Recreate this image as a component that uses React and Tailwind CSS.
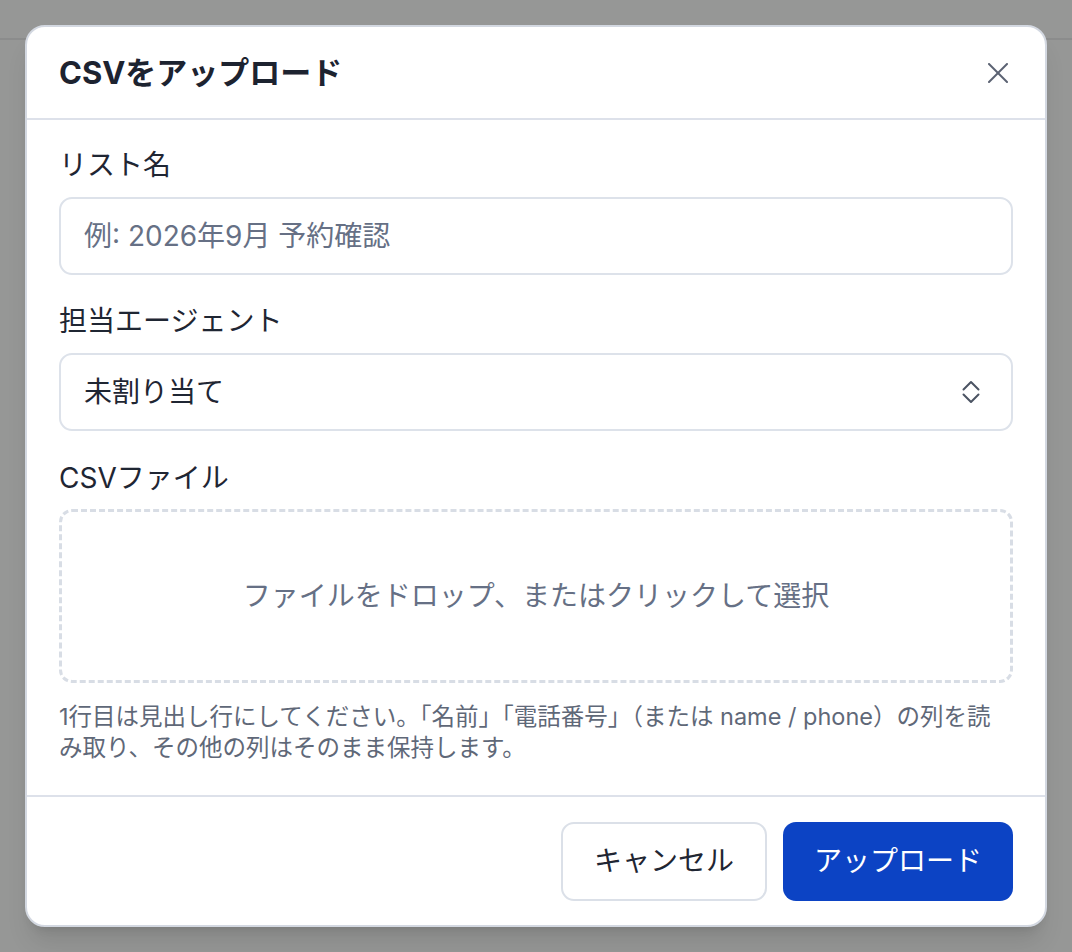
import { useState } from 'react';

function CloseIcon() {
  return (
    <svg width="20" height="20" viewBox="0 0 20 20" fill="none" stroke="currentColor" strokeWidth="2" strokeLinecap="round">
      <path d="M1 1 L19 19" />
      <path d="M19 1 L1 19" />
    </svg>
  );
}

function UpDownIcon() {
  return (
    <svg width="18" height="24" viewBox="0 0 18 24" fill="none" stroke="currentColor" strokeWidth="2" strokeLinecap="round" strokeLinejoin="round">
      <path d="M1.5 9.5 L9 2 L16.5 9.5" />
      <path d="M1.5 14.5 L9 22 L16.5 14.5" />
    </svg>
  );
}

export default function App() {
  const [name, setName] = useState('');

  return (
    <div className="h-screen bg-[#969796] font-[Inter,'Noto_Sans_CJK_JP',sans-serif] relative overflow-hidden">
      <div className="h-[40px] border-b-2 border-[#8b8c8c]" />
      <div className="absolute inset-0 flex items-center justify-center">
        <div className="w-[1022px] h-[902px] bg-white rounded-[20px] border-2 border-[#d3d8e1] shadow-xl flex flex-col overflow-hidden">
          <div className="h-[93px] shrink-0 flex items-center justify-between px-8 border-b-2 border-[#dde1ea]">
            <h2 className="text-[31px] font-bold text-[#1d2330] leading-none">CSVをアップロード</h2>
            <button className="w-9 h-9 mr-[-3px] flex items-center justify-center text-[#5b6272]">
              <CloseIcon />
            </button>
          </div>

          <div className="px-8 pt-[27px] pb-8 border-b-2 border-[#dde1ea]">
            <label className="block text-[28px] leading-[36px] text-[#1f2633] mb-[14px]">リスト名</label>
            <input
              value={name}
              onChange={e => setName(e.target.value)}
              placeholder="例: 2026年9月 予約確認"
              className="w-full h-[78px] rounded-[13px] border-2 border-[#dde2ea] pl-[23px] text-[28px] text-[#1f2633] placeholder:text-[#667085] focus:outline-none"
            />

            <label className="block text-[28px] leading-[36px] text-[#1f2633] mt-[28px] mb-[14px]">担当エージェント</label>
            <button className="w-full h-[78px] rounded-[13px] border-2 border-[#dde2ea] pl-[23px] pr-[31px] flex items-center justify-between text-[28px] text-[#1f2633]">
              <span>未割り当て</span>
              <span className="text-[#4b5463]"><UpDownIcon /></span>
            </button>

            <label className="block text-[28px] leading-[36px] text-[#1f2633] mt-[29px] mb-[13px]">CSVファイル</label>
            <div className="h-[174px] rounded-[13px] border-[3px] border-dashed border-[#d8dde5] flex items-center justify-center text-[28px] text-[#667085]">
              ファイルをドロップ、またはクリックして選択
            </div>

            <p className="mt-[18px] text-[23.5px] leading-[31px] text-[#5f6878]">
              1行目は見出し行にしてください。「名前」「電話番号」（または name / phone）の列を読<br />み取り、その他の列はそのまま保持します。
            </p>
          </div>

          <div className="flex-1 flex items-center justify-end gap-4 px-8">
            <button className="w-[206px] h-[79px] rounded-[13px] border-2 border-[#dbe0e8] text-[28px] text-[#1f2633]">
              キャンセル
            </button>
            <button className="w-[230px] h-[79px] rounded-[13px] bg-[#0c43c4] text-[28px] text-white">
              アップロード
            </button>
          </div>
        </div>
      </div>
    </div>
  );
}
